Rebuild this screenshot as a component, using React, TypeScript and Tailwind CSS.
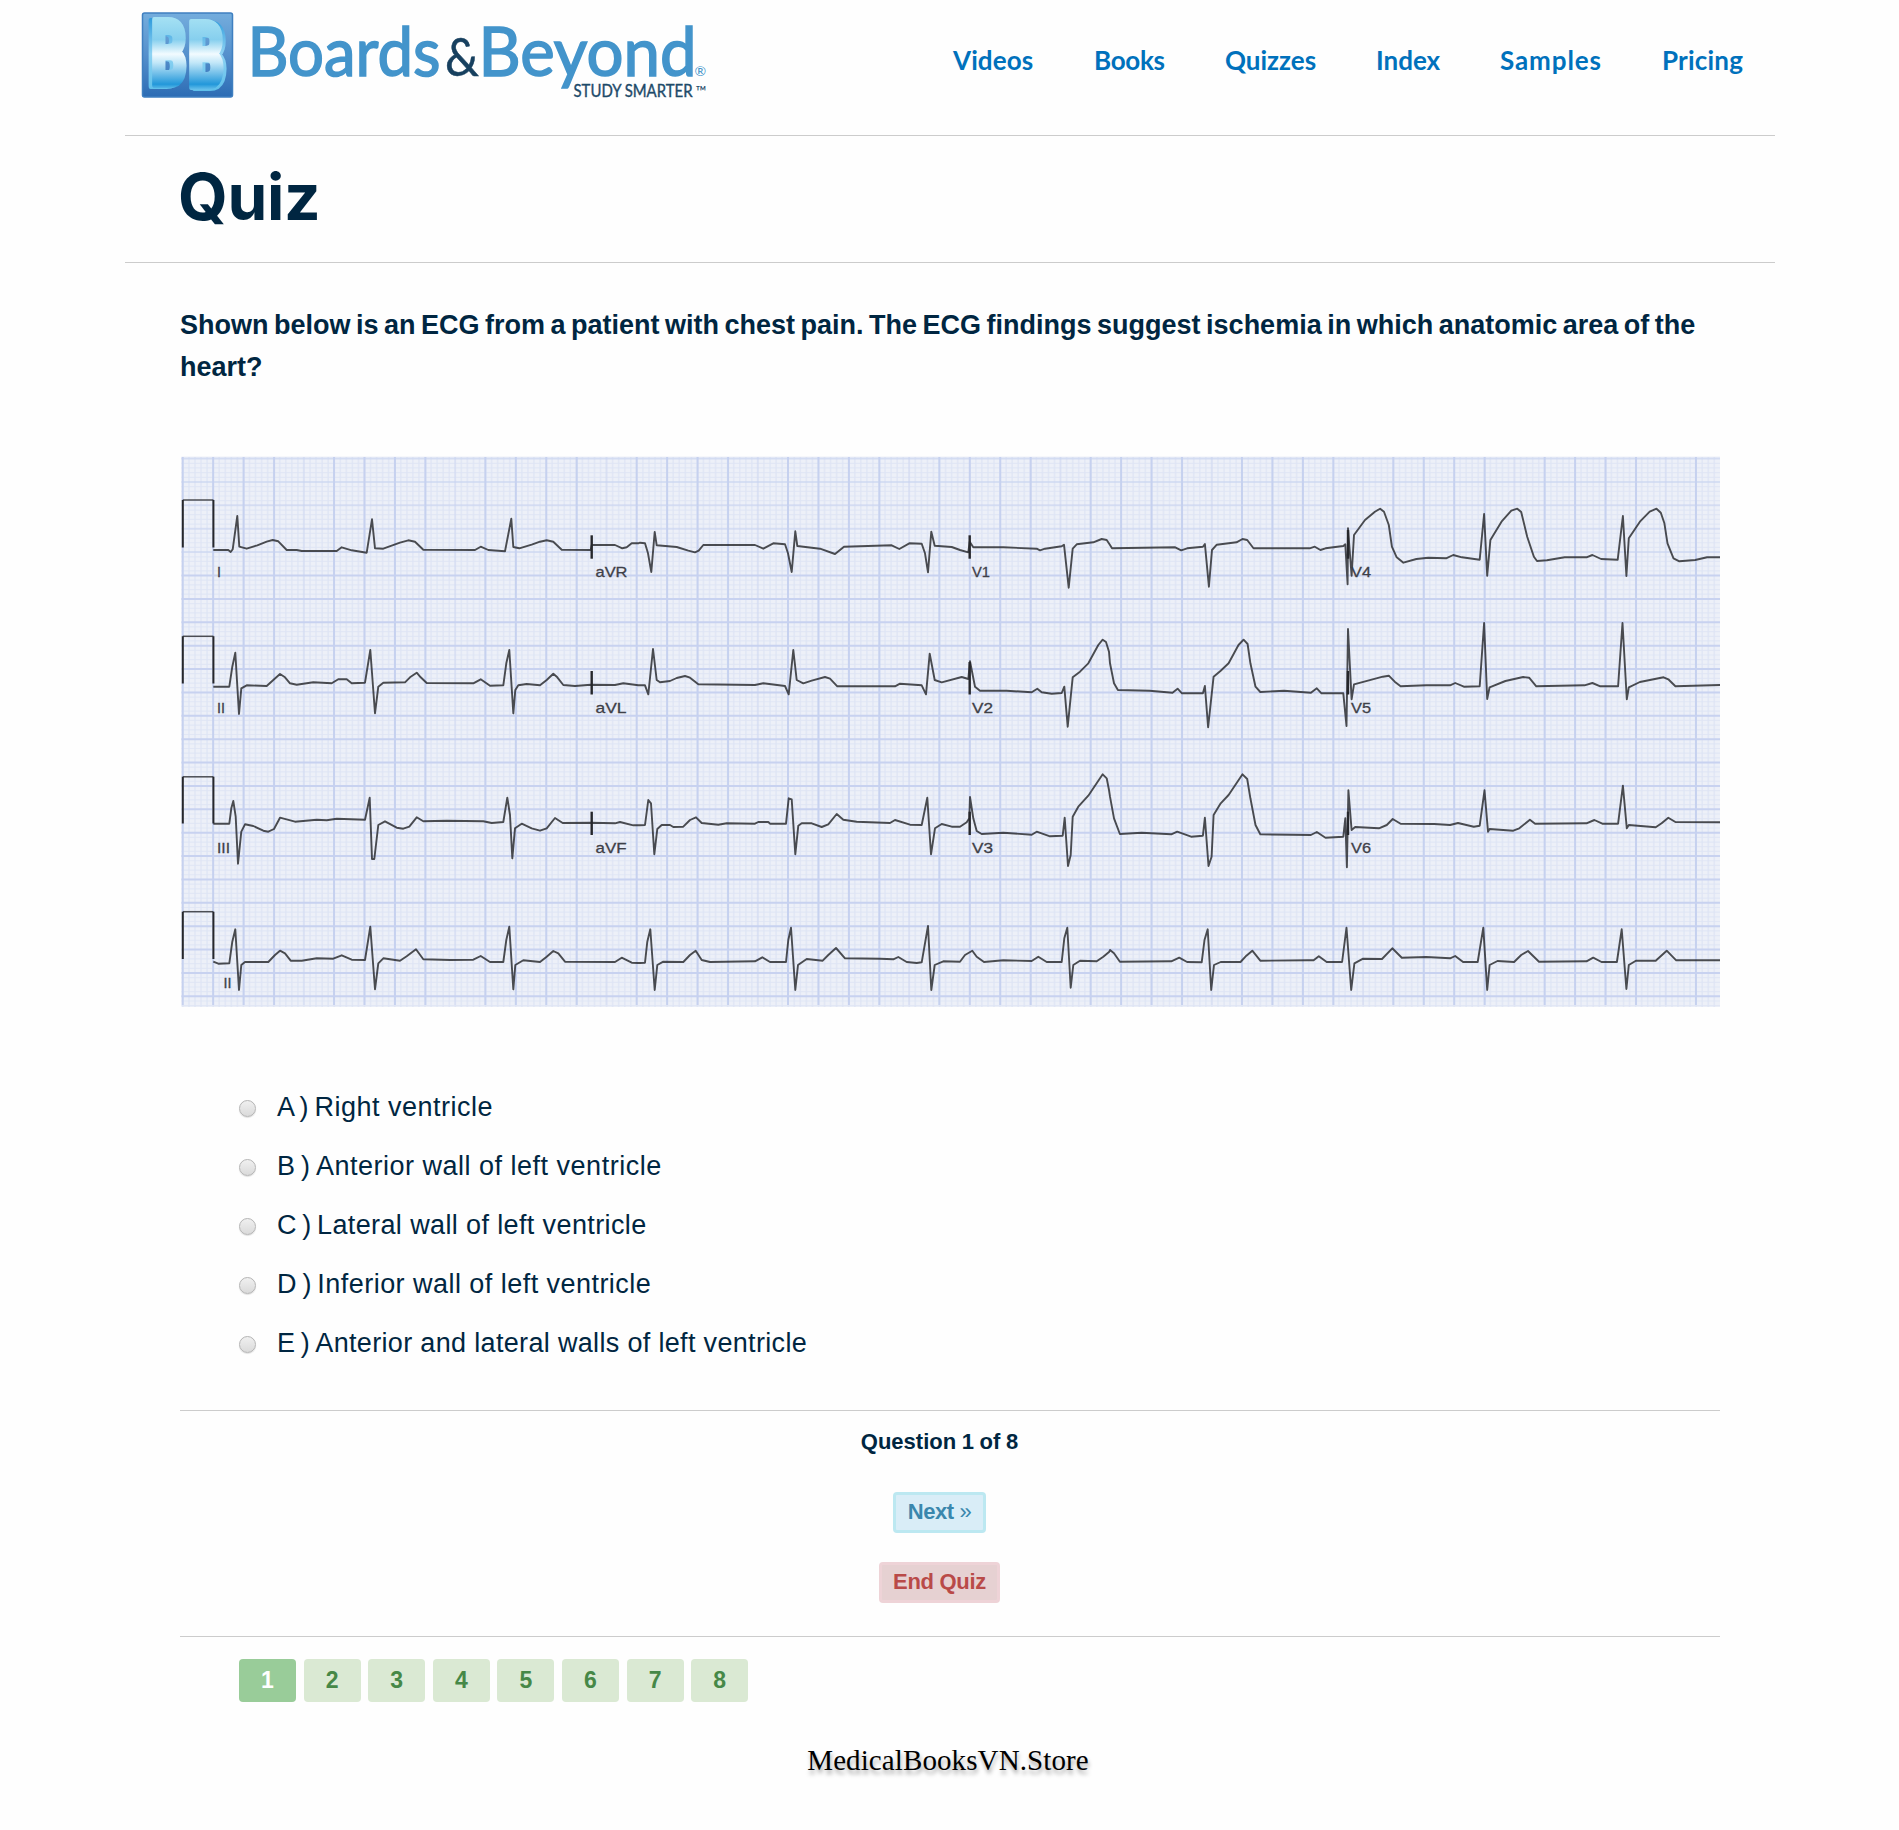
import React from "react";

const NAV = [
  { label: "Videos", cls: "w-[141px] tracking-[0.1px]" },
  { label: "Books", cls: "w-[131px] tracking-[-0.3px]" },
  { label: "Quizzes", cls: "w-[151px]" },
  { label: "Index", cls: "w-[124px]" },
  { label: "Samples", cls: "w-[162px] tracking-[0.9px]" },
  { label: "Pricing", cls: "tracking-[0.2px]" },
];

const OPTIONS = [
  { key: "A", text: "Right ventricle", cls: "tracking-[0.5px]" },
  { key: "B", text: "Anterior wall of left ventricle", cls: "tracking-[0.5px]" },
  { key: "C", text: "Lateral wall of left ventricle", cls: "tracking-[0.38px]" },
  { key: "D", text: "Inferior wall of left ventricle", cls: "tracking-[0.46px]" },
  { key: "E", text: "Anterior and lateral walls of left ventricle", cls: "tracking-[0.33px]" },
];

/* ---------- ECG ---------- */

type Region = { x: number; y: number; sx: number; sy: number };
const TOP: Region[] = [
  { x: 170, y: 450, sx: 3, sy: 3 },
  { x: 640, y: 450, sx: 3, sy: 3 },
  { x: 1110, y: 450, sx: 2.529, sy: 3 },
];
const BOTTOM: Region[] = TOP.map((r) => ({ ...r, y: 735 }));

const path = (r: Region, pts: string) =>
  pts
    .trim()
    .split(/\s+/)
    .map((p) => {
      const [x, y] = p.split(",").map(Number);
      return `${(r.x + x / r.sx).toFixed(1)},${(r.y + y / r.sy).toFixed(1)}`;
    })
    .join(" L");

const joined = (rs: Region[], parts: string[]) => "M" + parts.map((p, i) => path(rs[i], p)).join(" L");

const ROWS: { regions: Region[]; parts: string[] }[] = [
  {
    regions: TOP,
    parts: [
      "130,300 175,300 182,306 188,298 202,198 208,290 230,296 262,286 290,275 308,270 325,274 350,300 380,300 395,303 440,303 500,303 515,292 545,301 590,308 606,208 615,295 640,296 690,278 715,271 735,275 760,299 915,300 932,290 955,300 1005,304 1024,206 1030,291 1048,295 1085,284 1110,275 1130,271 1150,275 1175,299 1262,300 1265,285 1335,285 1357,295 1370,292 1385,280 1405,280",
      "0,278 15,280 24,310 34,366 44,246 50,286 110,291 145,302 165,307 176,302 190,285 345,285 370,296 400,280 435,283 444,310 455,366 466,244 472,288 540,296 585,312 612,290 755,286 778,297 808,280 845,281 855,310 864,367 874,245 884,287 935,291 960,300 985,307 989,275 1000,292 1090,292 1190,296 1200,301 1215,296 1265,289 1272,284 1286,413 1298,296 1310,283 1360,277 1385,267 1400,270",
      "0,285 5,295 165,292 180,301 195,295 235,290 240,282 250,410 258,300 270,284 320,277 335,267 347,270 363,295 505,295 518,290 532,300 545,295 590,288 595,283 601,403 602,235 611,377 617,255 645,210 670,185 683,176 693,185 705,225 713,290 725,322 742,338 775,327 805,323 850,325 868,315 890,322 935,329 946,192 954,377 962,270 990,215 1015,182 1030,176 1040,186 1055,260 1072,320 1080,333 1105,331 1150,322 1205,322 1220,315 1242,327 1284,329 1297,198 1306,378 1312,265 1340,215 1365,185 1382,176 1393,188 1402,220 1410,280 1425,325 1440,334 1480,330 1510,322 1543,322",
    ],
  },
  {
    regions: TOP,
    parts: [
      "130,710 178,710 187,650 196,608 207,792 214,715 230,706 290,708 310,690 330,672 345,682 360,700 380,704 430,697 485,700 505,688 530,688 545,700 585,698 601,600 615,790 625,710 640,698 705,697 720,682 740,668 752,682 770,699 910,700 932,688 960,707 1000,706 1009,640 1018,600 1030,790 1036,720 1045,706 1070,702 1110,706 1130,690 1150,671 1162,682 1180,705 1215,708 1262,704 1335,705 1360,700 1405,706",
      "0,706 15,706 25,733 39,597 50,690 60,697 90,693 110,684 135,678 150,683 175,703 345,705 370,700 435,708 446,733 460,600 470,690 490,700 515,692 555,681 570,686 592,709 765,709 780,701 845,706 858,733 869,611 884,690 905,697 965,681 985,687 990,634 1005,710 1020,722 1100,722 1175,727 1192,716 1205,727 1235,731 1265,729 1273,710 1283,830 1298,682 1320,665 1345,640 1375,585 1388,569 1398,576 1407,605",
      "0,640 10,700 20,720 100,722 158,728 171,716 182,730 235,730 240,708 248,832 262,680 280,662 300,640 325,585 338,569 348,582 355,640 368,710 380,726 440,722 508,728 523,715 535,730 590,730 598,828 602,537 611,748 617,703 690,680 705,677 720,695 735,709 800,706 860,706 873,699 895,710 935,709 946,519 954,747 960,712 1000,693 1045,681 1060,683 1078,709 1200,706 1220,699 1240,709 1285,709 1296,519 1307,748 1312,712 1340,696 1400,682 1412,688 1430,709 1543,705",
    ],
  },
  {
    regions: BOTTOM,
    parts: [
      "130,266 178,266 184,220 190,198 197,245 204,386 214,290 225,268 250,273 280,287 295,290 312,282 330,248 375,260 440,254 470,256 500,251 585,254 599,188 606,372 613,372 625,270 645,259 680,278 700,281 718,275 740,247 760,259 830,257 940,259 965,264 1000,261 1012,188 1020,240 1027,370 1035,280 1055,266 1085,280 1110,287 1130,280 1155,249 1178,264 1262,263 1335,265 1350,261 1390,271 1405,271",
      "0,271 15,270 25,195 33,205 43,358 52,282 65,270 90,270 100,276 130,275 150,255 168,247 185,264 235,269 260,265 345,266 355,261 385,261 390,266 438,266 446,190 455,193 466,358 475,272 485,265 515,265 545,276 565,268 590,237 610,254 650,260 750,264 765,255 810,269 845,270 862,188 873,358 885,280 905,267 935,275 960,275 980,262 988,250 990,186 1000,250 1010,288 1025,297 1090,293 1175,299 1190,290 1230,304 1268,302 1274,248 1284,393 1292,360 1298,245 1315,215 1345,182 1360,160 1388,118 1400,130 1407,165",
      "0,185 10,250 25,297 80,293 155,298 170,290 205,305 235,302 240,248 249,393 257,365 262,240 280,205 300,180 335,118 347,132 355,190 368,270 380,298 508,300 523,291 545,308 590,305 595,250 599,397 603,166 611,285 620,276 680,280 700,270 715,252 735,266 820,267 860,270 880,264 920,275 935,272 947,166 956,290 960,282 1020,287 1035,280 1062,254 1075,266 1205,265 1225,255 1245,266 1285,266 1297,152 1307,280 1312,270 1380,277 1395,265 1412,248 1430,261 1543,262",
    ],
  },
  {
    regions: BOTTOM,
    parts: [
      "130,680 145,686 178,685 187,620 196,583 207,765 214,690 225,681 295,681 315,660 330,647 345,655 362,677 395,677 440,670 490,671 515,661 545,674 585,675 601,575 615,763 625,685 640,670 690,677 710,664 738,643 760,673 840,675 910,674 932,663 960,681 1000,681 1009,615 1018,575 1030,763 1036,690 1060,676 1110,681 1130,665 1150,648 1165,655 1185,680 1335,681 1355,668 1385,683 1405,684",
      "0,684 15,683 22,620 31,583 44,765 52,690 70,680 130,681 150,660 167,647 185,675 210,681 345,679 367,667 390,681 438,681 445,615 453,578 466,765 474,690 500,672 548,677 565,660 588,639 615,670 720,671 760,673 775,666 800,681 830,684 845,682 864,573 874,765 884,690 910,679 960,680 975,660 997,647 1010,665 1032,681 1090,676 1175,678 1195,665 1220,681 1265,681 1273,610 1282,578 1292,758 1300,690 1320,677 1370,679 1390,665 1408,650",
      "0,645 10,655 25,680 155,679 175,668 195,681 232,682 239,615 247,583 256,765 263,690 280,681 330,681 345,662 360,647 380,677 500,676 515,676 528,664 548,681 587,681 598,578 610,765 618,685 640,671 688,672 714,640 738,668 800,666 860,670 873,663 893,681 930,681 944,578 954,765 960,690 980,678 1022,681 1040,660 1057,648 1085,680 1205,679 1222,668 1243,681 1282,681 1294,583 1306,762 1312,690 1330,677 1380,677 1408,647 1432,676 1543,676",
    ],
  },
];

const CAL = [
  { top: 500, base: 547.5 },
  { top: 636.3, base: 683.5 },
  { top: 776.8, base: 823.5 },
  { top: 911.7, base: 959 },
];

const LEADS = [
  { t: "I", x: 217, y: 577, w: 4 },
  { t: "aVR", x: 595.5, y: 577, w: 32 },
  { t: "V1", x: 972, y: 577, w: 18 },
  { t: "V4", x: 1351, y: 577, w: 20 },
  { t: "II", x: 217, y: 713, w: 8 },
  { t: "aVL", x: 595.5, y: 713, w: 31 },
  { t: "V2", x: 972, y: 713, w: 21 },
  { t: "V5", x: 1351, y: 713, w: 20 },
  { t: "III", x: 217, y: 853, w: 13 },
  { t: "aVF", x: 595.5, y: 853, w: 31 },
  { t: "V3", x: 972, y: 853, w: 21 },
  { t: "V6", x: 1351, y: 853, w: 20 },
  { t: "II", x: 223.5, y: 988, w: 8 },
];

const TICKS = [
  [591.7, 535.3, 558.7],
  [591.7, 671, 694.5],
  [591.7, 811.7, 835],
  [969.7, 535.3, 558.7],
  [969.7, 662, 694.5],
  [969.7, 811.7, 835],
  [1348, 530, 558.7],
  [1348, 671, 694.5],
  [1348, 811.7, 835],
];

function Ecg() {
  const minorX = Array.from({ length: 254 }, (_, i) => 182.9 + i * 6.053);
  const minorY = Array.from({ length: 118 }, (_, i) => 458.6 + i * 4.676);
  const majorX = Array.from({ length: 51 }, (_, i) => i);
  const majorY = Array.from({ length: 24 }, (_, i) => i);
  return (
    <svg className="block h-[551px] w-[1540px]" viewBox="180 456 1540 551">
      <rect x="181.5" y="456.5" width="1538.5" height="550.5" fill="#edf0f8" />
      <g stroke="#dde4f4" strokeWidth="1.6" strokeOpacity="0.75">
        {minorX.map((x) => (
          <line key={x} x1={x} x2={x} y1="457" y2="1007" />
        ))}
        {minorY.map((y) => (
          <line key={y} x1="181.5" x2="1720" y1={y} y2={y} strokeWidth="1.2" />
        ))}
      </g>
      <g stroke="#c6d1ef" strokeWidth="2">
        {majorX.map((i) => {
          const faint = i % 5 === 4;
          const x = 182.7 + i * 30.265 + (faint ? 0 : (i % 5) * 0.2);
          return <line key={i} x1={x} x2={x} y1="457" y2="1005" strokeOpacity={faint ? 0.3 : 1} />;
        })}
        {majorY.map((i) => {
          const y = 458.6 + i * 23.38;
          return <line key={i} x1="181.5" x2="1720" y1={y} y2={y} strokeOpacity={i < 5 ? 0.5 : 0.95} />;
        })}
      </g>
      <g fill="none" stroke="#26272b" strokeLinejoin="round">
        {CAL.map((c) => (
          <g key={c.top}>
            <path d={`M182.8,${c.top}V${c.base}M213.4,${c.top}V${c.base}`} strokeWidth="2" />
            <path d={`M182.8,${c.top}H213.4`} strokeWidth="1.5" strokeOpacity="0.8" />
          </g>
        ))}
        {ROWS.map((r, i) => (
          <path key={i} d={joined(r.regions, r.parts)} strokeWidth="1.9" strokeOpacity="0.82" />
        ))}
        {TICKS.map(([x, a, b]) => (
          <line key={`${x}-${a}`} x1={x} x2={x} y1={a} y2={b} strokeWidth="2.4" />
        ))}
      </g>
      <g fill="#3e4048" stroke="#3e4048" strokeWidth="0.3" fontFamily="'Liberation Sans', sans-serif" fontSize="15">
        {LEADS.map((l) => (
          <text key={`${l.t}${l.x}${l.y}`} x={l.x} y={l.y} textLength={l.w} lengthAdjust="spacingAndGlyphs">
            {l.t}
          </text>
        ))}
      </g>
    </svg>
  );
}

/* ---------- Logo ---------- */

function Logo() {
  return (
    <svg className="block h-[110px] w-[590px]" viewBox="125 0 590 110" fontFamily="Lato, sans-serif">
      <defs>
        <linearGradient id="tile" x1="0" y1="0" x2="0" y2="1">
          <stop offset="0" stopColor="#74addd" />
          <stop offset="0.5" stopColor="#5590cc" />
          <stop offset="1" stopColor="#2c6cb4" />
        </linearGradient>
        <linearGradient id="letter" gradientUnits="userSpaceOnUse" x1="0" y1="18" x2="0" y2="90">
          <stop offset="0" stopColor="#a4e0f3" />
          <stop offset="0.3" stopColor="#86cfee" />
          <stop offset="0.5" stopColor="#f2fbff" />
          <stop offset="0.62" stopColor="#c2e7f8" />
          <stop offset="0.92" stopColor="#2297da" />
          <stop offset="1" stopColor="#6cc3ec" />
        </linearGradient>
        <linearGradient id="side" gradientUnits="userSpaceOnUse" x1="0" y1="18" x2="0" y2="90">
          <stop offset="0" stopColor="#2f9bdc" />
          <stop offset="0.5" stopColor="#8fd3f3" />
          <stop offset="1" stopColor="#5ebfea" />
        </linearGradient>
      </defs>
      <rect x="142.5" y="13" width="90" height="84" rx="2" fill="url(#tile)" stroke="#3f7fc0" strokeWidth="1.5" />
      <g fontFamily="Roboto, sans-serif" fontWeight="900" fontSize="90" strokeLinejoin="round">
        <g fill="url(#side)" stroke="url(#side)" strokeWidth="6">
          <text x="147.5" y="86" textLength="36" lengthAdjust="spacingAndGlyphs">B</text>
          <text x="191" y="87.5" textLength="36" lengthAdjust="spacingAndGlyphs">B</text>
        </g>
        <g fill="url(#letter)" stroke="url(#letter)" strokeWidth="6">
          <text x="151" y="85" textLength="36" lengthAdjust="spacingAndGlyphs">B</text>
          <text x="188" y="86.5" textLength="36" lengthAdjust="spacingAndGlyphs">B</text>
        </g>
      </g>
      <g fontSize="68" fill="#4394cb" stroke="#4394cb" strokeWidth="1.6">
        <text x="247.5" y="76" textLength="193" lengthAdjust="spacingAndGlyphs">Boards</text>
        <text x="478.5" y="76" textLength="218" lengthAdjust="spacingAndGlyphs">Beyond</text>
      </g>
      <text x="445" y="75.5" fontSize="53" fill="#17405f" stroke="#17405f" strokeWidth="0.5" textLength="34" lengthAdjust="spacingAndGlyphs">&amp;</text>
      <text x="694.5" y="76" fontSize="14" fill="#4394cb">®</text>
      <text x="573.5" y="97.3" fontSize="18" fill="#1d4a69" stroke="#1d4a69" strokeWidth="0.4" textLength="119" lengthAdjust="spacingAndGlyphs">
        STUDY SMARTER
      </text>
      <text x="695.5" y="96.5" fontSize="15" fill="#1d4a69" textLength="11" lengthAdjust="spacingAndGlyphs">™</text>
    </svg>
  );
}

/* ---------- Page ---------- */

export default function App() {
  return (
    <div className="h-[1830px] w-[1899px] overflow-hidden bg-[#fefefe] font-['Liberation_Sans',Arial,sans-serif] text-[#002641]">
      <header className="ml-[125px] flex h-[136px] w-[1650px] items-start border-b border-[#ccc]">
        <Logo />
        <nav className="ml-[238px] flex h-[120px] items-center font-[Lato,sans-serif] text-[26px] font-bold text-[#0071bc]">
          {NAV.map((n) => (
            <a key={n.label} className={`block shrink-0 whitespace-nowrap ${n.cls}`}>
              {n.label}
            </a>
          ))}
        </nav>
      </header>

      <div className="ml-[125px] flex h-[127px] w-[1650px] items-center border-b border-[#ccc] pb-[5px] pl-[53px]">
        <h1 className="font-[Inter,sans-serif] text-[64px] leading-none font-bold tracking-[-0.3px]">Quiz</h1>
      </div>

      <main className="ml-[180px] w-[1540px]">
        <p className="mt-[41px] text-[27px] leading-[42px] font-bold whitespace-nowrap [word-spacing:-2px]">
          Shown below is an ECG from a patient with chest pain. The ECG findings suggest ischemia in which anatomic area of the
          <br />
          heart?
        </p>

        <div className="mt-[68px]">
          <Ecg />
        </div>

        <ul className="mt-[71px] ml-[59px]">
          {OPTIONS.map((o) => (
            <li key={o.key} className="flex h-[59px] items-center text-[27px]">
              <span className="mt-[1px] block size-[17px] rounded-full border border-[#b4b4b4] bg-linear-to-b from-[#f0f0f0] to-[#dadada] shadow-[0_1px_1px_rgba(0,0,0,0.12)]" />
              <span className={`ml-[21px] whitespace-nowrap ${o.cls}`}>
                <span className="[word-spacing:-2.5px]">{o.key} ) </span>
                {o.text}
              </span>
            </li>
          ))}
        </ul>

        <div className="mt-[37px] flex h-[227px] flex-col items-center border-y border-[#ccc] pt-[16px] pr-[21px] text-[22px] font-bold">
          <div className="leading-[30px] [word-spacing:-0.5px]">Question 1 of 8</div>
          <button className="mt-[35px] h-[41px] w-[93px] rounded-[4px] border-[3px] border-[#bce8f1] bg-[#d9edf7] pb-[2px] leading-[33px] tracking-[-0.4px] whitespace-nowrap text-[#3a87ad]">
            Next <span className="font-normal">»</span>
          </button>
          <button className="mt-[29px] h-[41px] w-[121px] rounded-[4px] border-[3px] border-[#eed3d7] bg-[#e6d1d2] pb-[2px] leading-[33px] tracking-[-0.3px] whitespace-nowrap text-[#b94a48]">
            End Quiz
          </button>
        </div>

        <div className="mt-[22px] ml-[59px] flex gap-[7.6px]">
          {[1, 2, 3, 4, 5, 6, 7, 8].map((n) => (
            <button
              key={n}
              className={
                n === 1
                  ? "h-[43px] w-[57px] rounded-[4px] bg-[#99cc99] text-[23px] font-bold text-white"
                  : "h-[43px] w-[57px] rounded-[4px] bg-[#dae9d3] text-[23px] font-bold text-[#468847]"
              }
            >
              {n}
            </button>
          ))}
        </div>
      </main>

      <footer className="mt-[38px] pr-[3px] text-center font-['Liberation_Serif',serif] text-[29px] leading-[40px] tracking-[0.1px] text-black [text-shadow:1px_4px_4px_rgba(0,0,0,0.35)]">
        MedicalBooksVN.Store
      </footer>
    </div>
  );
}
